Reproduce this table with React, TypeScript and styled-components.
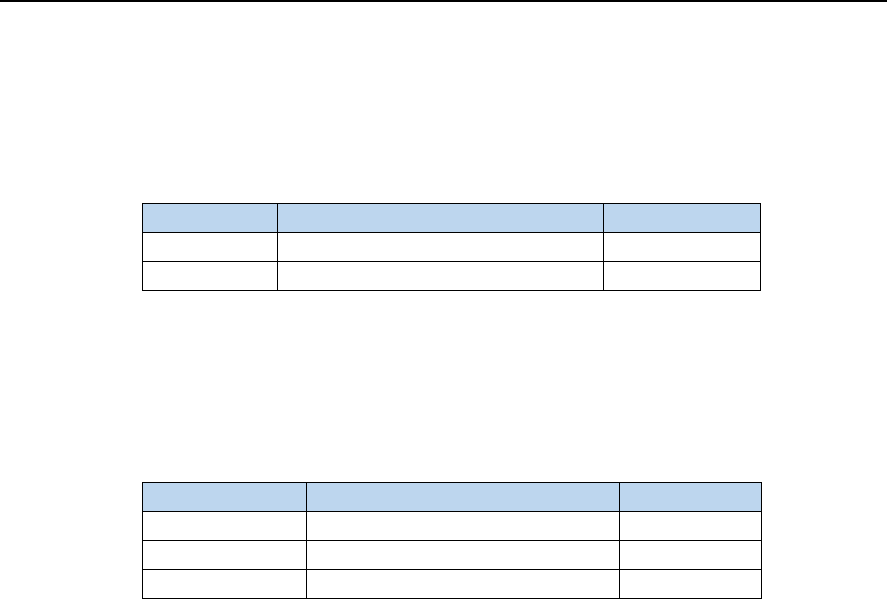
import React from 'react'
import styled, { createGlobalStyle } from 'styled-components'

const GlobalStyle = createGlobalStyle`
  html, body {
    margin: 0;
    padding: 0;
    background: #fff;
    font-family: "Liberation Sans", Arial, sans-serif;
  }
`

const Page = styled.div`
  width: 894px;
  height: 599px;
  overflow: hidden;
  background: #fff;
  display: flex;
  flex-direction: column;
`

const TopRule = styled.div`
  width: 887px;
  height: 2px;
  background: #000;
  flex-shrink: 0;
`

const Section = styled.section<{ $top: number }>`
  padding-top: ${(p) => p.$top}px;
  padding-left: 142px;
`

const Table = styled.table<{ $width: number }>`
  border-collapse: collapse;
  table-layout: fixed;
  width: ${(p) => p.$width}px;
`

const Cell = styled.td<{ $head?: boolean }>`
  border: 1px solid #000;
  height: 28px;
  padding: 0;
  background: ${(p) => (p.$head ? '#bdd6ee' : '#fff')};
  font-size: 14px;
`

interface TableSpec {
  top: number
  width: number
  cols: number[]
  rows: number
}

const tables: TableSpec[] = [
  { top: 201, width: 618, cols: [135, 326, 157], rows: 2 },
  { top: 191, width: 619, cols: [164, 313, 142], rows: 3 }
]

const DocTable = ({ spec }: { spec: TableSpec }) => (
  <Section $top={spec.top}>
    <Table $width={spec.width}>
      <colgroup>
        {spec.cols.map((w, i) => (
          <col key={i} style={{ width: w }} />
        ))}
      </colgroup>
      <tbody>
        <tr>
          {spec.cols.map((_, i) => (
            <Cell key={i} $head />
          ))}
        </tr>
        {Array.from({ length: spec.rows }).map((_, r) => (
          <tr key={r}>
            {spec.cols.map((__, i) => (
              <Cell key={i} />
            ))}
          </tr>
        ))}
      </tbody>
    </Table>
  </Section>
)

const App = () => (
  <>
    <GlobalStyle />
    <Page>
      <TopRule />
      {tables.map((t, i) => (
        <DocTable key={i} spec={t} />
      ))}
    </Page>
  </>
)

export default App
